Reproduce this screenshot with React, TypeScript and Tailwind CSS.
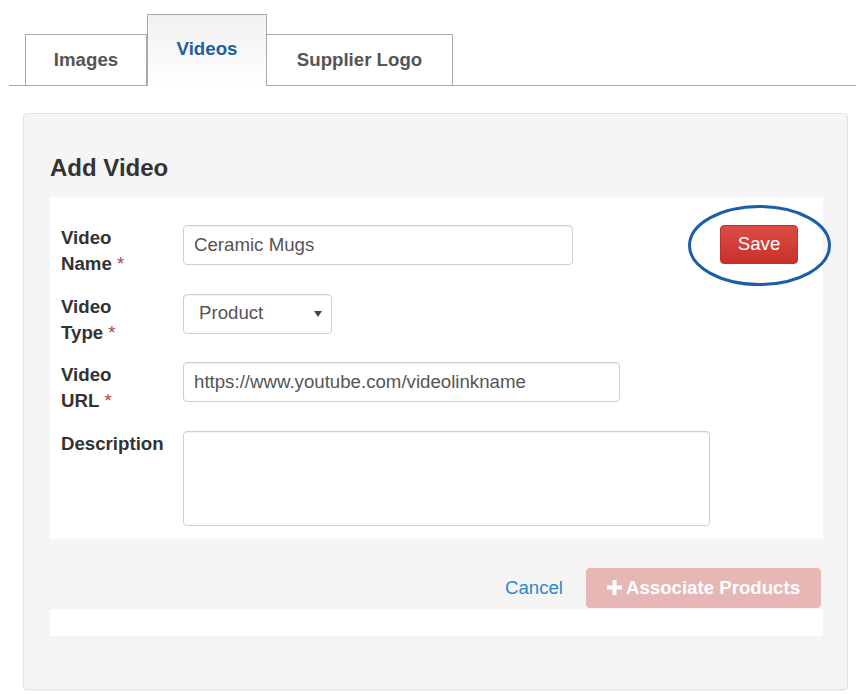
import React from 'react';

const Req = () => <span className="font-normal text-[#b5443f]"> *</span>;

function Row({ label, children, className = '' }: { label: React.ReactNode; children: React.ReactNode; className?: string }) {
  return (
    <div className={`flex items-start ${className}`}>
      <div className="w-[122px] shrink-0 font-bold leading-[26px] text-[#333]">{label}</div>
      {children}
    </div>
  );
}

const inputCls =
  'h-[40px] rounded-[4px] border border-[#cfcfcf] bg-white px-[10px] text-[18.67px] text-[#555] shadow-[inset_0_1px_1px_rgba(0,0,0,0.06)] outline-none';

export default function App() {
  return (
    <div className="relative h-[695px] w-[856px] overflow-hidden bg-white font-['Liberation_Sans',Arial,sans-serif] text-[18.67px] leading-[1.42857] text-[#333]">
      {/* TABS */}
      <div className="pt-[15px]">
        <div className="ml-[9px] flex h-[71px] items-end border-b border-[#a9a9a9] pl-[16px]">
          <div className="flex h-[51px] w-[122px] items-center justify-center border border-b-0 border-[#a9a9a9] font-bold text-[#555]">
            Images
          </div>
          <div className="-mb-px flex h-[72px] w-[120px] justify-center border border-b-0 border-[#a9a9a9] bg-linear-to-b from-[#f1f1f1] to-white pt-[21px] font-bold text-[#215f9e]">
            Videos
          </div>
          <div className="flex h-[51px] w-[186px] items-center justify-center border border-b-0 border-l-0 border-[#a9a9a9] font-bold text-[#555]">
            Supplier Logo
          </div>
        </div>
      </div>

      {/* PANEL */}
      <div className="ml-[23px] mt-[27px] h-[577px] w-[825px] rounded-[4px] border border-[#e2e2e2] bg-[#f5f5f5] pl-[26px] pt-[41px] shadow-[0_1px_1px_rgba(0,0,0,0.04)]">
        <h4 className="text-[24px] font-bold leading-[26px] text-[#333]">Add Video</h4>

        <div className="mt-[16px] w-[773px] bg-white pb-[13px] pl-[11px] pt-[28px]">
          <Row label={<>Video<br />Name<Req /></>}>
            <input readOnly value="Ceramic Mugs" className={`${inputCls} w-[390px]`} />
            <button className="ml-auto mr-[25px] h-[39px] w-[78px] rounded-[4px] border border-[#b8322d] bg-linear-to-b from-[#dd4b45] to-[#c9302c] text-white">
              Save
            </button>
          </Row>

          <Row label={<>Video<br />Type<Req /></>} className="mt-[16.67px]">
            <div className={`${inputCls} flex w-[149px] items-center justify-between pl-[15px] pr-[9px]`}>
              <span>Product</span>
              <svg width="8" height="6" viewBox="0 0 8 6" className="mt-[1px]">
                <path d="M0 0h8L4 6z" fill="#444" />
              </svg>
            </div>
          </Row>

          <Row label={<>Video<br />URL<Req /></>} className="mt-[16.67px]">
            <input readOnly value="https://www.youtube.com/videolinkname" className={`${inputCls} w-[437px]`} />
          </Row>

          <Row label="Description" className="mt-[16.67px]">
            <textarea readOnly className="h-[95px] w-[527px] resize-none rounded-[4px] border border-[#cfcfcf] bg-white shadow-[inset_0_1px_1px_rgba(0,0,0,0.06)] outline-none" />
          </Row>
        </div>

        {/* ACTIONS */}
        <div className="mt-[29px] flex w-[773px] items-center justify-end pr-[2px]">
          <span className="mr-[23px] text-[#2f87c6]">Cancel</span>
          <button className="flex h-[40px] w-[235px] items-center justify-center gap-[4px] rounded-[4px] bg-[#e6b7b5] font-bold text-white">
            <svg width="15" height="15" viewBox="0 0 15 15">
              <rect x="5.5" y="0" width="4" height="15" fill="white" />
              <rect x="0" y="5.5" width="15" height="4" fill="white" />
            </svg>
            Associate Products
          </button>
        </div>
        <div className="mt-px h-[27px] w-[773px] bg-white" />
      </div>

      {/* annotation ring */}
      <svg className="pointer-events-none absolute left-[687px] top-[204px]" width="145" height="83" viewBox="0 0 145 83">
        <ellipse cx="72.5" cy="41.5" rx="70" ry="39" fill="none" stroke="#1d5ea8" strokeWidth="3" />
      </svg>
    </div>
  );
}
